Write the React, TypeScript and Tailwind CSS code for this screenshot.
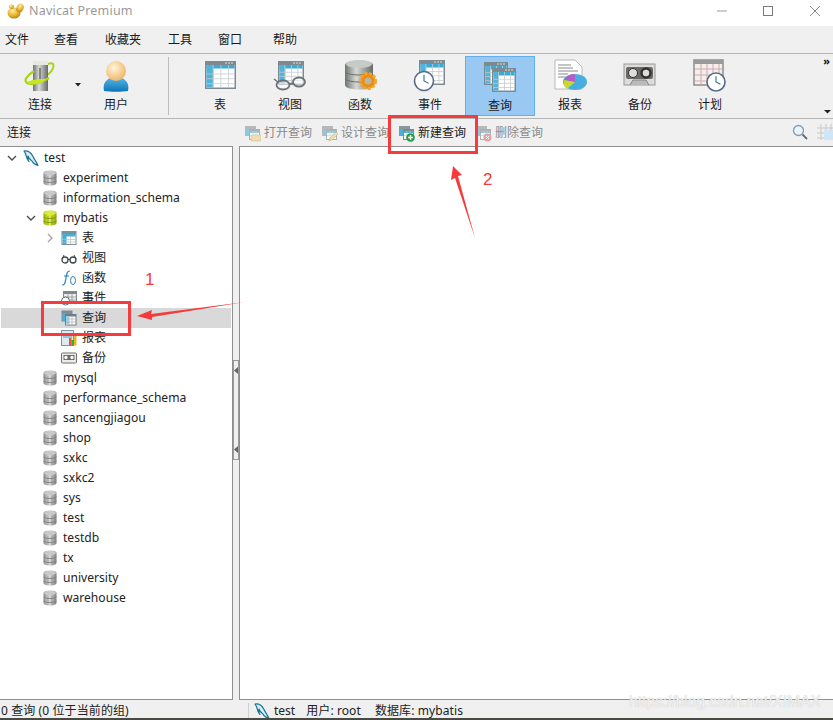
import React from "react";

const uiFont = "font-['Noto_Sans','Noto_Sans_CJK_SC',sans-serif]";

const GradientDefs = () => (
  <svg width="0" height="0" className="absolute">
    <defs>
      <linearGradient id="dbGray" x1="0" x2="1" y1="0" y2="0">
        <stop offset="0" stopColor="#8d8d8d" />
        <stop offset="0.45" stopColor="#dcdcdc" />
        <stop offset="1" stopColor="#7e7e7e" />
      </linearGradient>
      <linearGradient id="dbLime" x1="0" x2="1" y1="0" y2="0">
        <stop offset="0" stopColor="#8fae00" />
        <stop offset="0.45" stopColor="#e4f04a" />
        <stop offset="1" stopColor="#86a300" />
      </linearGradient>
      <linearGradient id="bigDb" x1="0" x2="1" y1="0" y2="0">
        <stop offset="0" stopColor="#6f746f" />
        <stop offset="0.4" stopColor="#d6d9d6" />
        <stop offset="1" stopColor="#666a66" />
      </linearGradient>
      <radialGradient id="userHead" cx="0.4" cy="0.35" r="0.7">
        <stop offset="0" stopColor="#fff4dc" />
        <stop offset="1" stopColor="#eeb35e" />
      </radialGradient>
      <linearGradient id="userBody" x1="0" x2="0" y1="0" y2="1">
        <stop offset="0" stopColor="#5db8e8" />
        <stop offset="1" stopColor="#0b76b8" />
      </linearGradient>
      <radialGradient id="logoGold" cx="0.4" cy="0.3" r="0.8">
        <stop offset="0" stopColor="#fff0a8" />
        <stop offset="0.55" stopColor="#e8b12c" />
        <stop offset="1" stopColor="#a87410" />
      </radialGradient>
    </defs>
  </svg>
);

// small cylinder used by every schema row
const DbIcon = ({ lime = false }: { lime?: boolean }) => (
  <svg width="14" height="16" viewBox="0 0 14 16" className="shrink-0">
    <path d="M0.500 3c0-3.500 13-3.500 13 0v10c0 3.500-13 3.500-13 0z" fill={lime ? "url(#dbLime)" : "url(#dbGray)"} />
    <ellipse cx="7" cy="3" rx="6" ry="2.200" fill={lime ? "#dcea3c" : "#c9c9c9"} />
    <path d="M0.500 7c2 2 11 2 13 0M0.500 11c2 2 11 2 13 0" stroke={lime ? "#76920a" : "#777"} strokeWidth="0.8" fill="none" />
    <path d="M5 6v9M9 6v9" stroke={lime ? "#76920a" : "#8a8a8a"} strokeWidth="0.6" />
  </svg>
);

const Dolphin = () => (
  <svg width="16" height="17" viewBox="0 0 16 17" className="shrink-0">
    <path d="M1 1c4-.5 7 1.500 9 5.500 1 2.500 3 4.500 5 9-3-1-5-2-6-4.500-2-1-3.500-3-4-5-.5 2 0 4 1 5.500C3.500 9 3 5.500 2.500 3.500 2 2.500 1.500 2 1 1z" fill="#d8edf5" stroke="#1b7596" strokeWidth="1.200" strokeLinejoin="round" />
  </svg>
);

const Chevron = ({ open = true, light = false }: { open?: boolean; light?: boolean }) => (
  <svg width="10" height="10" viewBox="0 0 10 10" className="shrink-0">
    <path
      d={open ? "M1 3l4 4 4-4" : "M3 1l4 4-4 4"}
      fill="none"
      stroke={light ? "#a6a6a6" : "#4d4d4d"}
      strokeWidth="1.4"
    />
  </svg>
);

// window frame with blue column + white cells, shared by table style icons
const Grid = ({ x, y, w, h }: { x: number; y: number; w: number; h: number }) => (
  <g>
    <rect x={x} y={y} width={w} height={h} fill="#7f8a90" />
    <rect x={x + 1.5} y={y + 4} width={w - 3} height={h - 5.5} fill="#fff" />
    <rect x={x + 1.5} y={y + 4} width={w - 3} height={3.5} fill="#38acd8" />
    <rect x={x + 1.5} y={y + 4} width={w / 4.5} height={h - 5.5} fill="#4fb4da" />
    {[0.45, 0.62, 0.8].map((f) => (
      <rect key={f} x={x + 1.5} y={y + h * f} width={w - 3} height={0.8} fill="#c8ccce" />
    ))}
    {[0.25, 0.5, 0.75].map((f) => (
      <rect key={f} x={x + w * f} y={y + 4} width={0.8} height={h - 5.5} fill="#c8ccce" />
    ))}
    <path d={`M${x + w - 11} ${y + 2}h2M${x + w - 8} ${y + 2}h2M${x + w - 5} ${y + 2}h2`} stroke="#d8dcde" strokeWidth="1.200" />
  </g>
);

const Clock = ({ cx, cy, r }: { cx: number; cy: number; r: number }) => (
  <g>
    <circle cx={cx} cy={cy} r={r} fill="#fff" stroke="#566a8a" strokeWidth="1.6" />
    <path d={`M${cx} ${cy - r * 0.65}V${cy}L${cx + r * 0.5} ${cy + r * 0.25}`} stroke="#2d6f94" strokeWidth="1.1" fill="none" />
  </g>
);

const BigIcon = ({ name }: { name: string }) => {
  const box = { width: 36, height: 36, viewBox: "0 0 36 36" };
  if (name === "连接")
    return (
      <svg {...box}>
        <path d="M24 9c5-3 9-2 7 3-1 3-4 6-7 8" fill="none" stroke="#a8d418" strokeWidth="2" />
        <rect x="11" y="5" width="15" height="30" fill="url(#bigDb)" />
        <rect x="11" y="5" width="15" height="4" fill="#e8e8e2" />
        <path d="M18 12v11" stroke="#555" strokeWidth="1.200" />
        <path d="M12 15C6 19 1 24 5 27c4 2 14 0 22-5" fill="none" stroke="#a8d418" strokeWidth="2.200" />
        <path d="M5 26c6-3 14-3 19-3-2 3-6 5-11 5-4 0-7 0-8-2z" fill="#c6e61e" />
      </svg>
    );
  if (name === "用户")
    return (
      <svg {...box}>
        <path d="M6 35c-2-9 4-14 12-14s14 5 12 14c-6 1-18 1-24 0z" fill="url(#userBody)" />
        <circle cx="18" cy="15" r="10" fill="url(#userHead)" />
      </svg>
    );
  if (name === "表")
    return (
      <svg {...box}>
        <Grid x={3} y={5} w={31} h={28} />
      </svg>
    );
  if (name === "视图")
    return (
      <svg {...box}>
        <Grid x={6} y={5} w={26} h={24} />
        <g fill="#ffffff88" stroke="#6f7377" strokeWidth="1.800">
          <ellipse cx="11" cy="29" rx="6.500" ry="4.500" />
          <ellipse cx="27" cy="26" rx="6" ry="4.500" />
        </g>
        <path d="M17 28l4-1M2 23l4 3" stroke="#6f7377" strokeWidth="1.500" />
      </svg>
    );
  if (name === "函数")
    return (
      <svg {...box}>
        <path d="M3 9c0-6 28-6 28 0v20c0 6-28 6-28 0z" fill="url(#bigDb)" />
        <ellipse cx="17" cy="8" rx="13" ry="4" fill="#c7cbc7" />
        <path d="M3 16c4 4 24 4 28 0M3 23c4 4 24 4 28 0" stroke="#6d716d" fill="none" />
        <circle cx="26" cy="25" r="7.500" fill="#ee8a12" stroke="#f5a623" strokeWidth="3" strokeDasharray="3 1.500" />
        <circle cx="26" cy="25" r="3.500" fill="#b7b7a4" />
      </svg>
    );
  if (name === "事件")
    return (
      <svg {...box}>
        <Grid x={7} y={4} w={26} h={25} />
        <Clock cx={12} cy={25} r={9.500} />
      </svg>
    );
  if (name === "查询")
    return (
      <svg {...box}>
        <Grid x={2} y={5} w={24} h={23} />
        <Grid x={10} y={11} w={24} h={24} />
      </svg>
    );
  if (name === "报表")
    return (
      <svg {...box}>
        <path d="M3 4h20l7 7v22H3z" fill="#fff" stroke="#b8b8b8" />
        <path d="M6 9h13M6 12h15M6 15h20M6 18h10M6 21h7" stroke="#8a8a8a" />
        <ellipse cx="23" cy="26" rx="12" ry="8" fill="#48aee0" />
        <path d="M23 26V18a12 8 0 0 0-11 6z" fill="#b35ec8" />
        <path d="M23 26l-11-2c-1 3 0 6 3 9z" fill="#cbd82c" />
      </svg>
    );
  if (name === "备份")
    return (
      <svg {...box}>
        <rect x="2" y="8" width="31" height="21" fill="#dcdcd8" stroke="#989898" />
        <rect x="4" y="11" width="27" height="12" rx="2" fill="#6d6a66" />
        <circle cx="11" cy="17" r="4.500" fill="#ddd" stroke="#333" />
        <circle cx="24" cy="17" r="4.500" fill="#ddd" stroke="#333" strokeWidth="2.500" />
        <path d="M8 29l3-5h13l3 5" fill="#bbb" stroke="#888" />
      </svg>
    );
  return (
    <svg {...box}>
      <rect x="2" y="4" width="29" height="25" fill="#f4efef" stroke="#8d8d8d" strokeWidth="1.500" />
      <rect x="2" y="4" width="29" height="4" fill="#9a9a9a" />
      <path d="M3 13h27M3 19h27M3 25h27M9 8v21M15 8v21M21 8v21M27 8v21" stroke="#d0a9a9" />
      <Clock cx={24} cy={26} r={9} />
    </svg>
  );
};

const SmallTable = ({ dim = false, badge }: { dim?: boolean; badge?: "open" | "edit" | "add" | "del" }) => (
  <svg width="17" height="17" viewBox="0 0 17 17" className={`shrink-0 ${dim ? "opacity-60" : ""}`}>
    <rect x="1" y="1" width="11" height="10" fill="#8b969c" />
    <rect x="5" y="4" width="11" height="11" fill="#7e8a90" />
    <rect x="2" y="4" width="3" height="6" fill="#49b0d8" />
    <rect x="6" y="6" width="9" height="8" fill="#fff" />
    <rect x="6" y="6" width="9" height="2" fill="#49b0d8" />
    <path d="M6 10.500h9M9 6v8M12 6v8" stroke="#bfc5c8" strokeWidth="0.7" />
    {badge === "open" && <rect x="7" y="10" width="10" height="6" rx="1" fill="#f0d38a" stroke="#b99a50" strokeWidth="0.6" />}
    {badge === "edit" && <path d="M8 16l1-3 6-6 2 2-6 6z" fill="#f2d67c" stroke="#a78a3c" strokeWidth="0.6" />}
    {badge === "add" && (
      <g>
        <circle cx="12.500" cy="12.500" r="4.300" fill="#239a45" />
        <path d="M10 12.500h5M12.500 10v5" stroke="#fff" strokeWidth="1.400" />
      </g>
    )}
    {badge === "del" && (
      <g>
        <circle cx="12.500" cy="12.500" r="4" fill="#e27070" />
        <path d="M11 11l3 3M14 11l-3 3" stroke="#fff" strokeWidth="1" />
      </g>
    )}
  </svg>
);

const TreeLeafIcon = ({ name }: { name: string }) => {
  const box = { width: 16, height: 16, viewBox: "0 0 16 16", className: "shrink-0" };
  if (name === "表")
    return (
      <svg {...box}>
        <rect x="0.500" y="1" width="15" height="14" fill="#7d8f98" />
        <rect x="1.500" y="4" width="13" height="10" fill="#fff" />
        <rect x="1.500" y="4" width="4" height="10" fill="#45aed6" />
        <rect x="1.500" y="4" width="13" height="2.500" fill="#45aed6" />
        <path d="M1.500 9.500h13M1.500 12h13M9.500 6v8" stroke="#b6bec2" strokeWidth="0.7" />
      </svg>
    );
  if (name === "视图")
    return (
      <svg {...box}>
        <circle cx="4" cy="10" r="3" fill="#fff" stroke="#3f474c" strokeWidth="1.300" />
        <circle cx="12" cy="10" r="3" fill="#fff" stroke="#3f474c" strokeWidth="1.300" />
        <path d="M7 9.500h2M1 9l2-4M15 9l-2-4" stroke="#3f474c" />
      </svg>
    );
  if (name === "函数")
    return (
      <svg {...box}>
        <path d="M1 15c3 0 3-2 4-7s1-7 4-7M3 6h5" fill="none" stroke="#2d7fb5" strokeWidth="1.200" />
        <ellipse cx="12" cy="10.500" rx="2.500" ry="4" fill="none" stroke="#2d7fb5" />
      </svg>
    );
  if (name === "事件")
    return (
      <svg {...box}>
        <rect x="2" y="1" width="14" height="13" fill="#82898c" />
        <rect x="3" y="4" width="12" height="9" fill="#efefef" />
        <path d="M3 7h12M3 10h12M7 4v9M11 4v9" stroke="#85898b" strokeWidth="0.7" />
        <circle cx="4.500" cy="11" r="4" fill="#fff" stroke="#5d6b78" />
      </svg>
    );
  if (name === "查询")
    return (
      <svg {...box}>
        <rect x="0.500" y="0.500" width="11" height="11" fill="#7e8d95" />
        <rect x="1.500" y="3" width="3" height="8" fill="#49b0d8" />
        <rect x="4" y="4" width="11.500" height="11.500" fill="#6f7e86" />
        <rect x="5" y="6.500" width="9.500" height="8" fill="#fff" />
        <rect x="5" y="6.500" width="3" height="8" fill="#9fd3e8" />
        <path d="M5 9h9.500M5 12h9.500M8 6.500v8M11 6.500v8" stroke="#a7b0b5" strokeWidth="0.7" />
      </svg>
    );
  if (name === "报表")
    return (
      <svg {...box}>
        <rect x="0.500" y="0.500" width="12" height="15" fill="#dceaf2" stroke="#7f98a6" />
        <path d="M2 4h9M2 7h9" stroke="#49a0c8" />
        <rect x="8" y="8" width="2.500" height="7.500" fill="#e4552f" />
        <rect x="10.500" y="10" width="2.500" height="5.500" fill="#3fa33f" />
        <rect x="13" y="6" width="2.500" height="9.500" fill="#e6b521" />
      </svg>
    );
  return (
    <svg {...box}>
      <rect x="0.500" y="3" width="15" height="10" rx="1" fill="#ececea" stroke="#70706e" />
      <rect x="2.500" y="5" width="11" height="5" fill="#6b6b69" />
      <circle cx="5" cy="7.500" r="1.700" fill="#fff" />
      <circle cx="11" cy="7.500" r="1.700" fill="#fff" />
    </svg>
  );
};

const toolbarItems = ["表", "视图", "函数", "事件", "查询", "报表", "备份", "计划"];

const menus = [
  { label: "文件", cls: "w-[49px]" },
  { label: "查看", cls: "w-[51px]" },
  { label: "收藏夹", cls: "w-[63px]" },
  { label: "工具", cls: "w-[50px]" },
  { label: "窗口", cls: "w-[55px]" },
  { label: "帮助", cls: "w-[30px]" },
];

const topSchemas = ["experiment", "information_schema"];
const bottomSchemas = [
  "mysql",
  "performance_schema",
  "sancengjiagou",
  "shop",
  "sxkc",
  "sxkc2",
  "sys",
  "test",
  "testdb",
  "tx",
  "university",
  "warehouse",
];
const leaves = ["视图", "函数", "事件", "查询", "报表", "备份"];

const ToolButton = ({ name }: { name: string }) => (
  <div
    className={`w-[70px] h-[60px] flex flex-col items-center box-border ${
      name === "查询" ? "bg-[#99c9f3] border border-[#62aef0]" : ""
    }`}
  >
    <BigIcon name={name} />
    <span className="text-[12px] leading-[16px] mt-[5px] text-[#1a1a1a]">{name}</span>
  </div>
);

const SubAction = ({
  label,
  badge,
  active = false,
  cls,
}: {
  label: string;
  badge: "open" | "edit" | "add" | "del";
  active?: boolean;
  cls: string;
}) => (
  <div className={`flex items-center gap-[3px] ${cls}`}>
    <SmallTable dim={!active} badge={badge} />
    <span className={`text-[12px] ${active ? "text-[#1a1a1a]" : "text-[#8a8a8a]"}`}>{label}</span>
  </div>
);

const SchemaRow = ({ name }: { name: string }) => (
  <div className="h-[20px] flex items-center pl-[43px] gap-[6px]">
    <DbIcon />
    <span>{name}</span>
  </div>
);

export default function App() {
  return (
    <div className={`relative w-[833px] h-[720px] overflow-hidden bg-[#f0f0f0] flex flex-col ${uiFont}`}>
      <GradientDefs />

      {/* title bar */}
      <div className="h-[26px] bg-white flex items-center pl-[7px] pb-[4px] shrink-0">
        <svg width="17" height="16" viewBox="0 0 17 16">
          <ellipse cx="7" cy="10" rx="6.500" ry="5.500" fill="url(#logoGold)" />
          <ellipse cx="13" cy="5" rx="3.500" ry="4.500" transform="rotate(25 13 5)" fill="url(#logoGold)" />
          <path d="M2 3c1-2 4-2 5 0 0 2-1 3-2 3-2 0-3-1-3-3z" fill="url(#logoGold)" />
        </svg>
        <span className="ml-[5px] text-[12.500px] text-[#9a9a9a] tracking-[0.2px]">Navicat Premium</span>
        <div className="ml-auto flex items-center h-full">
          <svg width="12" height="12" viewBox="0 0 12 12" className="mr-[34px]">
            <path d="M1 6h10" stroke="#9a9a9a" />
          </svg>
          <svg width="12" height="12" viewBox="0 0 12 12" className="mr-[35px]">
            <rect x="1.500" y="1.500" width="9" height="9" fill="none" stroke="#7a7a7a" />
          </svg>
          <svg width="12" height="12" viewBox="0 0 12 12" className="mr-[12px]">
            <path d="M1 1l10 10M11 1L1 11" stroke="#8a8a8a" />
          </svg>
        </div>
      </div>

      {/* menu */}
      <div className="h-[28px] flex items-center pl-[5px] text-[12px] text-[#1a1a1a] border-b border-[#b5b5b5] shrink-0">
        {menus.map((m) => (
          <span key={m.label} className={m.cls}>
            {m.label}
          </span>
        ))}
      </div>

      {/* main toolbar */}
      <div className="relative h-[65px] flex items-center pl-[5px] border-b border-[#b5b5b5] shrink-0">
        <ToolButton name="连接" />
        <svg width="6" height="4" viewBox="0 0 6 4" className="-mt-[2px]">
          <path d="M0 0h6L3 3.500z" fill="#222" />
        </svg>
        <ToolButton name="用户" />
        <div className="w-[1px] h-[58px] bg-[#bdbdbd] ml-[17px] mr-[16px]" />
        {toolbarItems.map((name) => (
          <ToolButton key={name} name={name} />
        ))}
        <span className="absolute right-[3px] top-[0px] text-[11px] leading-[14px] font-bold text-[#111]">»</span>
        <svg width="7" height="4" viewBox="0 0 7 4" className="absolute right-[2px] bottom-[4px]">
          <path d="M0 0h7L3.500 3.500z" fill="#222" />
        </svg>
      </div>

      {/* sub toolbar */}
      <div className="relative h-[27px] flex items-center shrink-0 pl-[7px] pt-[1px]">
        <span className="text-[12px] text-[#1a1a1a] w-[237px]">连接</span>
        <SubAction label="打开查询" badge="open" cls="w-[77px]" />
        <SubAction label="设计查询" badge="edit" cls="w-[77px]" />
        <SubAction label="新建查询" badge="add" active cls="w-[77px]" />
        <SubAction label="删除查询" badge="del" cls="w-[70px]" />
        <svg width="16" height="16" viewBox="0 0 16 16" className="absolute left-[792px] top-[5px]">
          <circle cx="6.500" cy="6.500" r="5" fill="#e8f3fb" stroke="#7f9fb5" strokeWidth="1.300" />
          <path d="M10.500 10.500l4.500 4.500" stroke="#596d7c" strokeWidth="1.800" />
        </svg>
        <svg width="16" height="16" viewBox="0 0 16 16" className="absolute left-[817px] top-[5px]">
          <path d="M0 4h16M0 9h16M0 14h16M4 0v16M9 0v16M14 0v16" stroke="#c7c7c7" />
          <rect x="7" y="6" width="9" height="10" fill="#cfe6f7" />
        </svg>
      </div>

      {/* panes */}
      <div className="flex flex-1 min-h-0">
        <div className="w-[233px] bg-white border-t border-r border-b border-[#8f8f8f] pt-[1px] text-[12.100px] text-[#222] overflow-hidden">
          <div className="h-[20px] flex items-center pl-[7px]">
            <Chevron />
            <span className="ml-[6px]">
              <Dolphin />
            </span>
            <span className="ml-[5px]">test</span>
          </div>
          {topSchemas.map((s) => (
            <SchemaRow key={s} name={s} />
          ))}
          <div className="h-[20px] flex items-center pl-[26px]">
            <Chevron />
            <span className="ml-[7px]">
              <DbIcon lime />
            </span>
            <span className="ml-[6px]">mybatis</span>
          </div>
          <div className="h-[20px] flex items-center pl-[45px]">
            <Chevron open={false} light />
            <span className="ml-[6px]">
              <TreeLeafIcon name="表" />
            </span>
            <span className="ml-[5px]">表</span>
          </div>
          {leaves.map((name) => (
            <div
              key={name}
              className={`h-[20px] flex items-center pl-[60px] gap-[5px] mx-[1px] ${
                name === "查询" ? "bg-[#d9d9d9]" : ""
              }`}
            >
              <TreeLeafIcon name={name} />
              <span>{name}</span>
            </div>
          ))}
          {bottomSchemas.map((s) => (
            <SchemaRow key={s} name={s} />
          ))}
        </div>

        {/* splitter with the two collapse grips */}
        <div className="w-[6px] relative">
          <div className="absolute top-[214px] left-0 w-[6px] h-[100px] border border-[#9a9a9a] flex flex-col justify-between items-center py-[6px]">
            <svg width="4" height="7" viewBox="0 0 4 7">
              <path d="M0 3.500L4 0v7z" fill="#666" />
            </svg>
            <svg width="4" height="7" viewBox="0 0 4 7">
              <path d="M0 3.500L4 0v7z" fill="#666" />
            </svg>
          </div>
        </div>

        <div className="flex-1 bg-white border-t border-l border-b border-[#8f8f8f]" />
      </div>

      {/* status bar */}
      <div className="h-[18px] flex items-center text-[12px] text-[#222] shrink-0 pt-[4px]">
        <span className="w-[248px] pl-[1px] tracking-[0.1px]">0 查询 (0 位于当前的组)</span>
        <div className="w-[1px] h-[16px] bg-[#d0d0d0]" />
        <span className="ml-[5px]">
          <Dolphin />
        </span>
        <span className="ml-[4px]">test</span>
        <span className="ml-[11px] tracking-[0.1px]">用户: root</span>
        <span className="ml-[14px] tracking-[0.1px]">数据库: mybatis</span>
      </div>
      <div className="h-[2px] bg-[#4a4a44] shrink-0" />

      {/* blog watermark */}
      <span className="absolute left-[629px] top-[691px] text-[16px] leading-[22px] tracking-[-0.2px] text-white/80 font-['Liberation_Sans',sans-serif] [text-shadow:0_0_1px_#b0b0b0]">
        https://blog.csdn.net/XIMAX
      </span>

      {/* red annotations painted over the screenshot */}
      <div className="absolute left-[41px] top-[301px] w-[90px] h-[35px] border-[3px] border-[#f53b3b]" />
      <div className="absolute left-[388px] top-[115px] w-[90px] h-[39px] border-[3px] border-[#f53b3b]" />
      <span className="absolute left-[145px] top-[270px] text-[17px] leading-[20px] text-[#f53b3b] font-['Liberation_Sans',sans-serif]">
        1
      </span>
      <span className="absolute left-[483px] top-[170px] text-[17px] leading-[20px] text-[#f53b3b] font-['Liberation_Sans',sans-serif]">
        2
      </span>
      <svg width="833" height="720" viewBox="0 0 833 720" className="absolute left-0 top-0 pointer-events-none">
        <path d="M137 316l15-6-1 4 94-12-93 15 0 3z" fill="#f53b3b" />
        <path d="M453 166l9 9-4 1 17 62-20-60-4 2z" fill="#f53b3b" />
      </svg>
    </div>
  );
}
